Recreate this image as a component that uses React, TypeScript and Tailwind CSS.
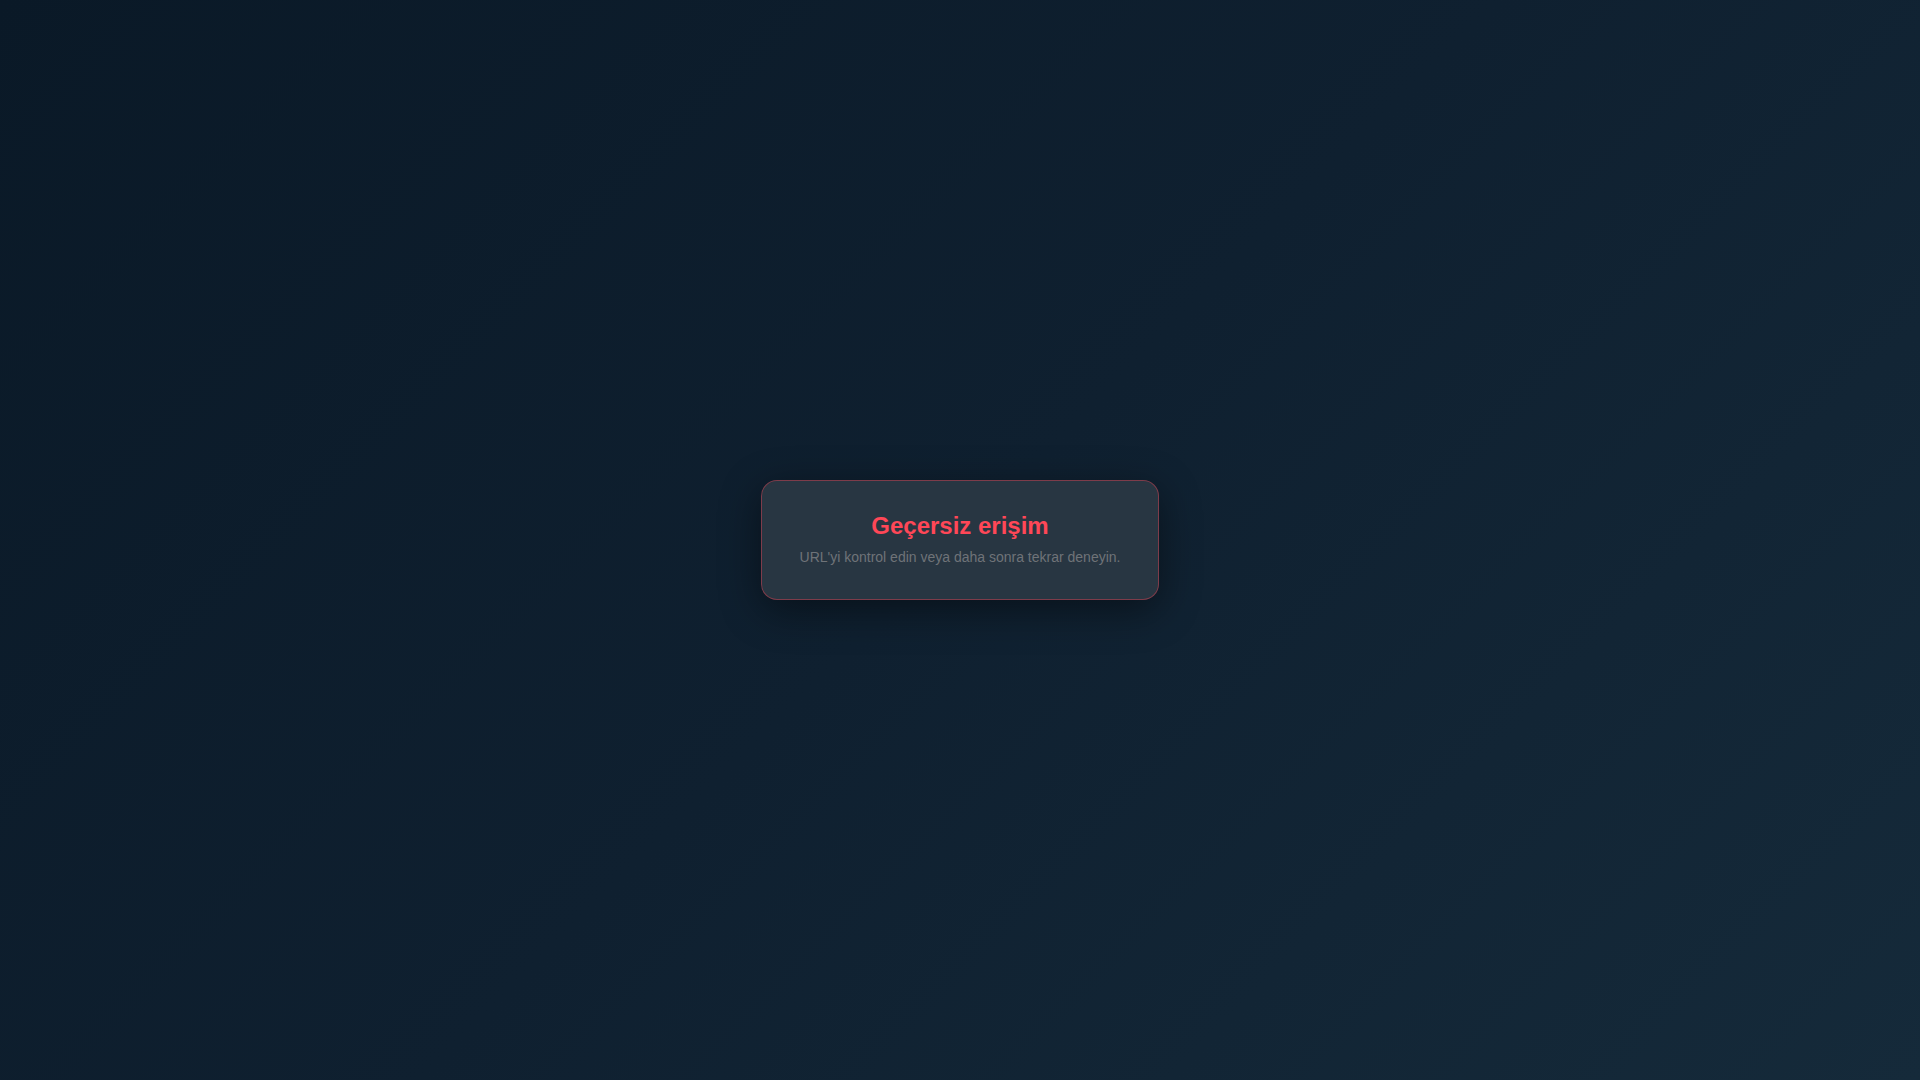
export default function App() {
  return (
    <main className="flex min-h-screen w-full items-center justify-center bg-[linear-gradient(135deg,#0a1927_0%,#0f2030_50%,#152a3a_100%)] font-['Liberation_Sans',Arial,sans-serif]">
      <div className="rounded-2xl border-[1.5px] border-[#ff4757]/40 bg-[#283642] px-[38px] pt-[31px] pb-8 text-center shadow-[0_10px_40px_rgba(0,0,0,0.45)]">
        <h1 className="mb-2 text-2xl leading-[1.15] font-bold text-[#ff4757]">Geçersiz erişim</h1>
        <p className="text-sm leading-5 text-[#6f7378]">URL'yi kontrol edin veya daha sonra tekrar deneyin.</p>
      </div>
    </main>
  );
}
